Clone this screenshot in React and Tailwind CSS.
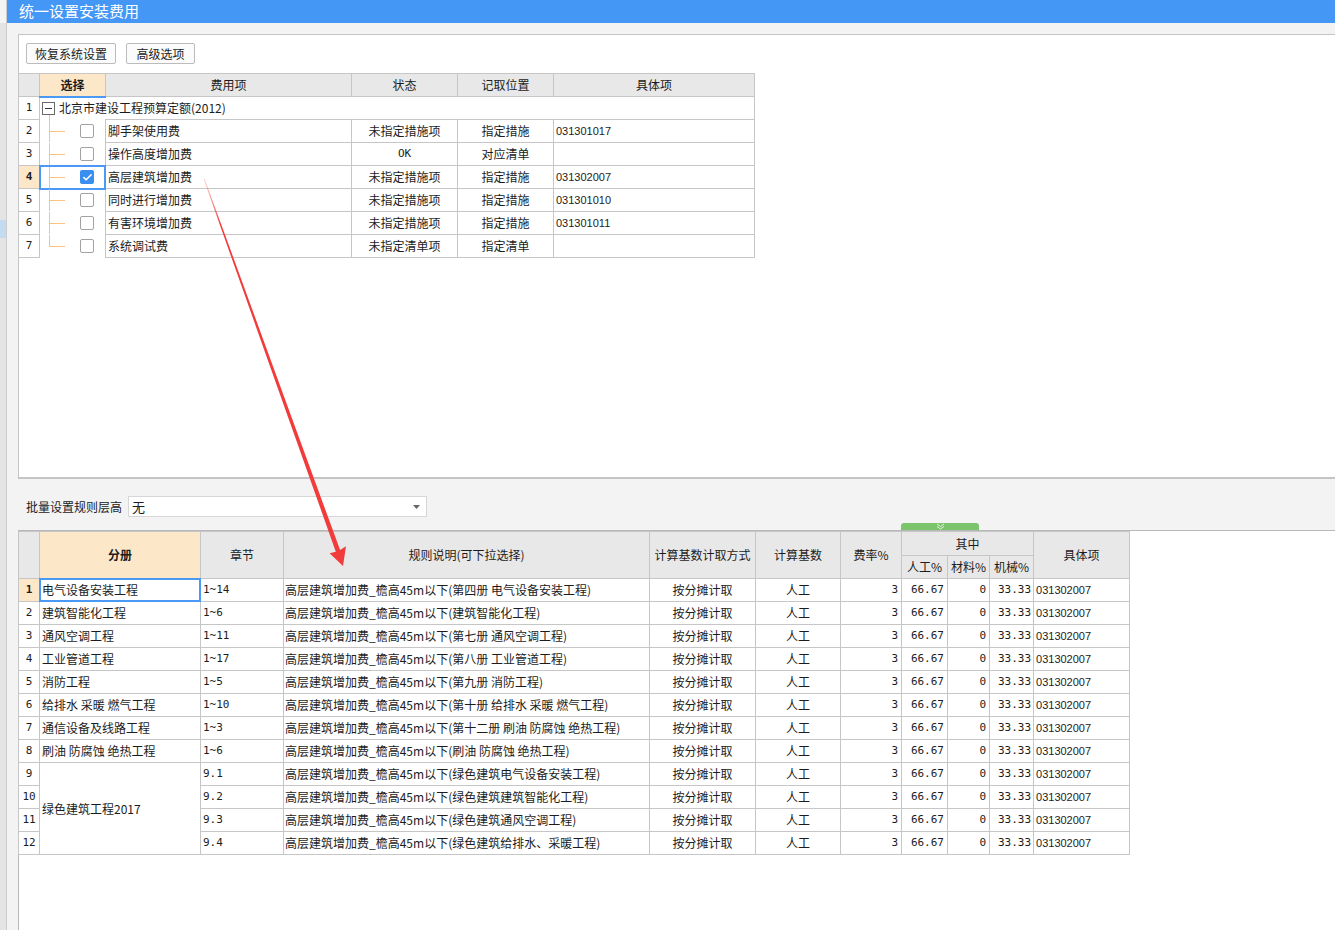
import React from 'react';
import { Check } from 'lucide-react';

const topRows = [
  { name: '脚手架使用费', status: '未指定措施项', pos: '指定措施', code: '031301017' },
  { name: '操作高度增加费', status: 'OK', pos: '对应清单', code: '' },
  { name: '高层建筑增加费', status: '未指定措施项', pos: '指定措施', code: '031302007', checked: true },
  { name: '同时进行增加费', status: '未指定措施项', pos: '指定措施', code: '031301010' },
  { name: '有害环境增加费', status: '未指定措施项', pos: '指定措施', code: '031301011' },
  { name: '系统调试费', status: '未指定清单项', pos: '指定清单', code: '' },
];

const rulePrefix = '高层建筑增加费_檐高45m以下';

const bottomRows = [
  ['电气设备安装工程', '1~14', '(第四册 电气设备安装工程)'],
  ['建筑智能化工程', '1~6', '(建筑智能化工程)'],
  ['通风空调工程', '1~11', '(第七册 通风空调工程)'],
  ['工业管道工程', '1~17', '(第八册 工业管道工程)'],
  ['消防工程', '1~5', '(第九册 消防工程)'],
  ['给排水 采暖 燃气工程', '1~10', '(第十册 给排水 采暖 燃气工程)'],
  ['通信设备及线路工程', '1~3', '(第十二册 刷油 防腐蚀 绝热工程)'],
  ['刷油 防腐蚀 绝热工程', '1~6', '(刷油 防腐蚀 绝热工程)'],
  [null, '9.1', '(绿色建筑电气设备安装工程)'],
  [null, '9.2', '(绿色建筑建筑智能化工程)'],
  [null, '9.3', '(绿色建筑通风空调工程)'],
  [null, '9.4', '(绿色建筑给排水、采暖工程)'],
];

const cell = 'border border-[#c6c6c6]';
const mono = "font-['DejaVu_Sans_Mono',monospace] text-[11px]";

function Checkbox({ checked }) {
  if (checked) {
    return (
      <span className="flex h-[14px] w-[14px] items-center justify-center rounded-[2px] bg-[#3a8ef0]">
        <Check size={11} strokeWidth={3.5} className="text-white" />
      </span>
    );
  }
  return <span className="block h-[14px] w-[14px] rounded-[2px] border border-[#a2a2a2] bg-white" />;
}

function TreeCell({ last, checked }) {
  return (
    <div className="flex h-[22px] items-stretch">
      <div className="w-[9px]" />
      <div className="flex w-[16px] flex-col">
        <div className="flex-1 border-b border-l border-[#f7c47e]" />
        <div className={last ? 'flex-1' : 'flex-1 border-l border-[#f7c47e]'} />
      </div>
      <div className="flex flex-1 items-center pl-[15px]">
        <Checkbox checked={checked} />
      </div>
    </div>
  );
}

export default function App() {
  return (
    <div className="relative flex h-[930px] w-[1335px] overflow-hidden bg-white font-['Noto_Sans_CJK_SC','Liberation_Sans',sans-serif] text-[12px] text-[#1c1c1c]">
      {/* edge of the window behind */}
      <div className="flex w-[7px] flex-col border-r border-[#cdcdcd] bg-[#e4e4e4]">
        <div className="h-[23px] bg-[#f4f4f4]" />
        <div className="mt-[197px] h-[18px] bg-[#c3daf1]" />
      </div>

      <div className="flex flex-1 flex-col">
        <div className="flex h-[23px] items-center bg-[#4597f5] pl-[12px] text-[15px] text-white">统一设置安装费用</div>

        <div className="flex flex-1 flex-col bg-[#f3f3f3] pl-[11px] pt-[11px]">
          {/* top panel */}
          <div className="flex h-[445px] flex-col border-l border-t border-b-2 border-[#c4c4c4] bg-white">
            <div className="flex gap-[10px] pl-[7px] pt-[8px]">
              <button className="h-[21px] w-[90px] rounded-[2px] border border-[#bcbcbc] bg-[#fbfbfb] text-[12px] text-[#222]">恢复系统设置</button>
              <button className="h-[21px] w-[69px] rounded-[2px] border border-[#bcbcbc] bg-[#fbfbfb] text-[12px] text-[#222]">高级选项</button>
            </div>

            <table className="-ml-px mt-[9px] w-[736px] table-fixed border-collapse">
              <colgroup>
                <col className="w-[21px]" />
                <col className="w-[66px]" />
                <col className="w-[246px]" />
                <col className="w-[106px]" />
                <col className="w-[96px]" />
                <col className="w-[201px]" />
              </colgroup>
              <thead>
                <tr className="h-[23px] bg-[#e8e8e8]">
                  <th className={cell} />
                  <th className="border border-b-2 border-[#c6c6c6] border-b-[#4a9af5] bg-[#fde7c9] font-bold">选择</th>
                  <th className={`${cell} font-normal`}>费用项</th>
                  <th className={`${cell} font-normal`}>状态</th>
                  <th className={`${cell} font-normal`}>记取位置</th>
                  <th className={`${cell} font-normal`}>具体项</th>
                </tr>
              </thead>
              <tbody>
                <tr className="h-[23px]">
                  <td className={`${cell} text-center ${mono}`}>1</td>
                  <td colSpan={5} className="relative border border-b-0 border-[#c6c6c6] pl-[2px]">
                    <div className="flex items-center gap-[4px]">
                      <span className="flex h-[13px] w-[13px] items-center justify-center border border-[#6a6a6a]">
                        <span className="h-px w-[7px] bg-[#333]" />
                      </span>
                      <span>北京市建设工程预算定额(2012)</span>
                    </div>
                    <span className="absolute left-[9px] top-[17px] h-[6px] border-l border-[#f7c47e]" />
                  </td>
                </tr>
                {topRows.map((r, i) => (
                  <tr key={r.name} className="h-[23px]">
                    <td className={r.checked ? `${cell} bg-[#fde7c9] text-center font-bold ${mono}` : `${cell} text-center ${mono}`}>{i + 2}</td>
                    <td className="relative border-x border-y-0 border-[#c6c6c6] p-0">
                      <TreeCell last={i === topRows.length - 1} checked={r.checked} />
                      {r.checked && <div className="absolute -inset-px border-2 border-[#4a9af5]" />}
                    </td>
                    <td className={`${cell} pl-[2px]`}>{r.name}</td>
                    <td className={r.status === 'OK' ? `${cell} text-center ${mono}` : `${cell} text-center`}>{r.status}</td>
                    <td className={`${cell} text-center`}>{r.pos}</td>
                    <td className={`${cell} pl-[2px] font-['Liberation_Sans',sans-serif] text-[11px]`}>{r.code}</td>
                  </tr>
                ))}
              </tbody>
            </table>
          </div>

          {/* batch setting */}
          <div className="flex h-[51px] items-start pl-[8px] pt-[17px]">
            <span className="mt-[2px] w-[102px] text-[#222]">批量设置规则层高</span>
            <div className="flex h-[21px] w-[299px] items-center justify-between border border-[#d6d6d6] bg-white pl-[3px] pr-[6px]">
              <span className="text-[13px]">无</span>
              <svg width="7" height="4" viewBox="0 0 7 4">
                <path d="M0 0h7L3.5 4z" fill="#666" />
              </svg>
            </div>
          </div>

          {/* bottom panel */}
          <div className="flex-1 border-l border-t border-[#b8b8b8] bg-white">
            <table className="-ml-px w-[1111px] table-fixed border-collapse">
              <colgroup>
                <col className="w-[21px]" />
                <col className="w-[161px]" />
                <col className="w-[83px]" />
                <col className="w-[366px]" />
                <col className="w-[106px]" />
                <col className="w-[85px]" />
                <col className="w-[61px]" />
                <col className="w-[46px]" />
                <col className="w-[42px]" />
                <col className="w-[44px]" />
                <col className="w-[96px]" />
              </colgroup>
              <thead className="bg-[#e8e8e8]">
                <tr className="h-[24px]">
                  <th rowSpan={2} className={cell} />
                  <th rowSpan={2} className={`${cell} bg-[#fde7c9] font-bold`}>分册</th>
                  <th rowSpan={2} className={`${cell} font-normal`}>章节</th>
                  <th rowSpan={2} className={`${cell} font-normal`}>规则说明(可下拉选择)</th>
                  <th rowSpan={2} className={`${cell} font-normal`}>计算基数计取方式</th>
                  <th rowSpan={2} className={`${cell} font-normal`}>计算基数</th>
                  <th rowSpan={2} className={`${cell} font-normal`}>费率%</th>
                  <th colSpan={3} className={`${cell} font-normal`}>其中</th>
                  <th rowSpan={2} className={`${cell} font-normal`}>具体项</th>
                </tr>
                <tr className="h-[23px]">
                  <th className={`${cell} font-normal`}>人工%</th>
                  <th className={`${cell} font-normal`}>材料%</th>
                  <th className={`${cell} font-normal`}>机械%</th>
                </tr>
              </thead>
              <tbody>
                {bottomRows.map((r, i) => (
                  <tr key={i} className="h-[23px]">
                    <td className={i === 0 ? `${cell} bg-[#fde7c9] text-center font-bold ${mono}` : `${cell} text-center ${mono}`}>{i + 1}</td>
                    {r[0] !== null && (
                      <td className="relative border border-[#c6c6c6] pl-[2px]">
                        {r[0]}
                        {i === 0 && <div className="absolute -inset-px border-2 border-[#4a9af5]" />}
                      </td>
                    )}
                    {i === 8 && (
                      <td rowSpan={4} className={`${cell} pl-[2px]`}>绿色建筑工程2017</td>
                    )}
                    <td className={`${cell} pl-[2px] ${mono}`}>{r[1]}</td>
                    <td className={`${cell} pl-[1px]`}>{rulePrefix + r[2]}</td>
                    <td className={`${cell} text-center`}>按分摊计取</td>
                    <td className={`${cell} text-center`}>人工</td>
                    <td className={`${cell} pr-[3px] text-right ${mono}`}>3</td>
                    <td className={`${cell} pr-[3px] text-right ${mono}`}>66.67</td>
                    <td className={`${cell} pr-[3px] text-right ${mono}`}>0</td>
                    <td className={`${cell} pr-[2px] text-right ${mono}`}>33.33</td>
                    <td className={`${cell} pl-[2px] font-['Liberation_Sans',sans-serif] text-[11px]`}>031302007</td>
                  </tr>
                ))}
              </tbody>
            </table>
          </div>
        </div>
      </div>

      {/* splitter handle */}
      <div className="absolute left-[901px] top-[523px] flex h-[7px] w-[78px] items-center justify-center rounded-t-[3px] bg-[#7cc46b]">
        <svg width="9" height="7" viewBox="0 0 9 7">
          <path d="M1 1l3.5 2.5L8 1M1 3.5L4.5 6 8 3.5" fill="none" stroke="#e3f2dd" strokeWidth="1" />
        </svg>
      </div>

      {/* red annotation arrow */}
      <svg className="pointer-events-none absolute left-0 top-0" width="1335" height="930" viewBox="0 0 1335 930">
        <defs>
          <linearGradient id="arrowFade" x1="204" y1="179" x2="343" y2="565" gradientUnits="userSpaceOnUse">
            <stop offset="0" stopColor="#ff6b6b" stopOpacity="0.3" />
            <stop offset="0.12" stopColor="#f23b3b" />
            <stop offset="1" stopColor="#f23b3b" />
          </linearGradient>
        </defs>
        <polygon points="203.6,179.1 204.6,178.8 340.1,550.1 346,546.3 343,566 329.6,553.3 335.8,551.7" fill="url(#arrowFade)" />
      </svg>
    </div>
  );
}
